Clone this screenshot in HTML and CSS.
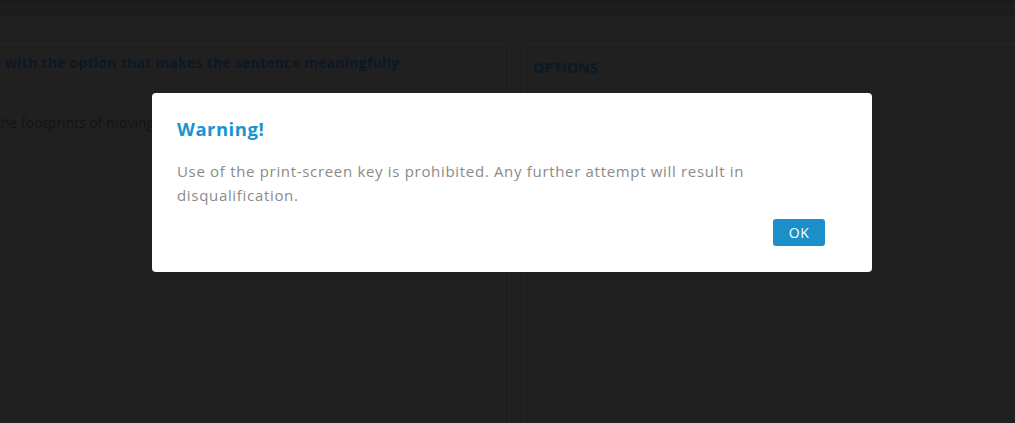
FILE: index.html
```html
<!DOCTYPE html>
<html lang="en">
<head>
<meta charset="utf-8">
<title>Exam</title>
<link rel="stylesheet" href="styles.css">
</head>
<body>
<div class="page">
  <header class="topbar"></header>
  <main class="content">
    <section class="panel question">
      <h2 class="q-title"><span class="lead">Fill in the blank</span> with the option that makes the sentence meaningfully</h2>
      <p class="q-text"><span class="lead">Fossils are t</span>he footprints of moving water.</p>
    </section>
    <section class="panel options">
      <h3 class="opt-title">OPTIONS</h3>
    </section>
  </main>
</div>
<div class="backdrop">
  <div class="modal" role="dialog">
    <h1 class="modal-title">Warning!</h1>
    <p class="modal-body">Use of the print-screen key is prohibited. Any further attempt will result in disqualification.</p>
    <div class="modal-actions">
      <button class="btn-ok">OK</button>
    </div>
  </div>
</div>
</body>
</html>
```
FILE: styles.css
```css
* { box-sizing: border-box; }
html, body { margin: 0; padding: 0; height: 100%; }
body {
  background: #202020;
  font-family: "Open Sans", "Noto Sans", sans-serif;
  overflow: hidden;
}
.page { height: 100%; display: flex; flex-direction: column; }
.topbar {
  height: 17px;
  background: #1d1d1d;
  border-top: 3px solid #1a1a1a;
}
.content {
  display: flex;
  gap: 13px;
  padding: 27px 0 0 0;
  margin-left: -200px;
  flex: 1;
}
.panel {
  border: 1px solid #262626;
  border-bottom: none;
  border-radius: 6px 6px 0 0;
}
.question { width: 710px; padding: 8px 0 0 60px; }
.options { flex: 1; margin-right: -20px; padding: 13px 9px; }
.lead {
  display: inline-block;
  width: 140px;
  text-align: right;
  white-space: nowrap;
  overflow: hidden;
  vertical-align: top;
}
.q-title {
  margin: 0;
  font-size: 14px;
  font-weight: 700;
  letter-spacing: 0.25px;
  line-height: 20px;
  color: #0c1824;
  white-space: nowrap;
}
.q-text {
  margin: 40px 0 0 0;
  font-size: 14px;
  line-height: 20px;
  color: #141414;
  white-space: nowrap;
}
.opt-title {
  margin: 0;
  font-size: 14px;
  font-weight: 700;
  letter-spacing: 0.3px;
  color: #0c1824;
}
.backdrop {
  position: fixed;
  inset: 0;
}
.modal {
  position: absolute;
  left: 152px;
  top: 93px;
  width: 720px;
  height: 179px;
  background: #fff;
  border-radius: 4px;
  padding: 24px 25px 0 25px;
}
.modal-title {
  margin: 0;
  font-size: 18.5px;
  font-weight: 700;
  letter-spacing: 0.5px;
  color: #1a94cf;
  line-height: 24px;
}
.modal-body {
  margin: 18px 0 0 0;
  font-size: 15px;
  letter-spacing: 0.68px;
  line-height: 24px;
  color: #8a8a8a;
  max-width: 640px;
}
.modal-actions {
  display: flex;
  justify-content: flex-end;
  margin-top: 12px;
  padding-right: 22px;
}
.btn-ok {
  width: 52px;
  height: 27px;
  border: none;
  border-radius: 3px;
  background: #1a8fc9;
  color: #fff;
  font-family: inherit;
  font-size: 14px;
  letter-spacing: 0.5px;
  padding: 0;
}
```
